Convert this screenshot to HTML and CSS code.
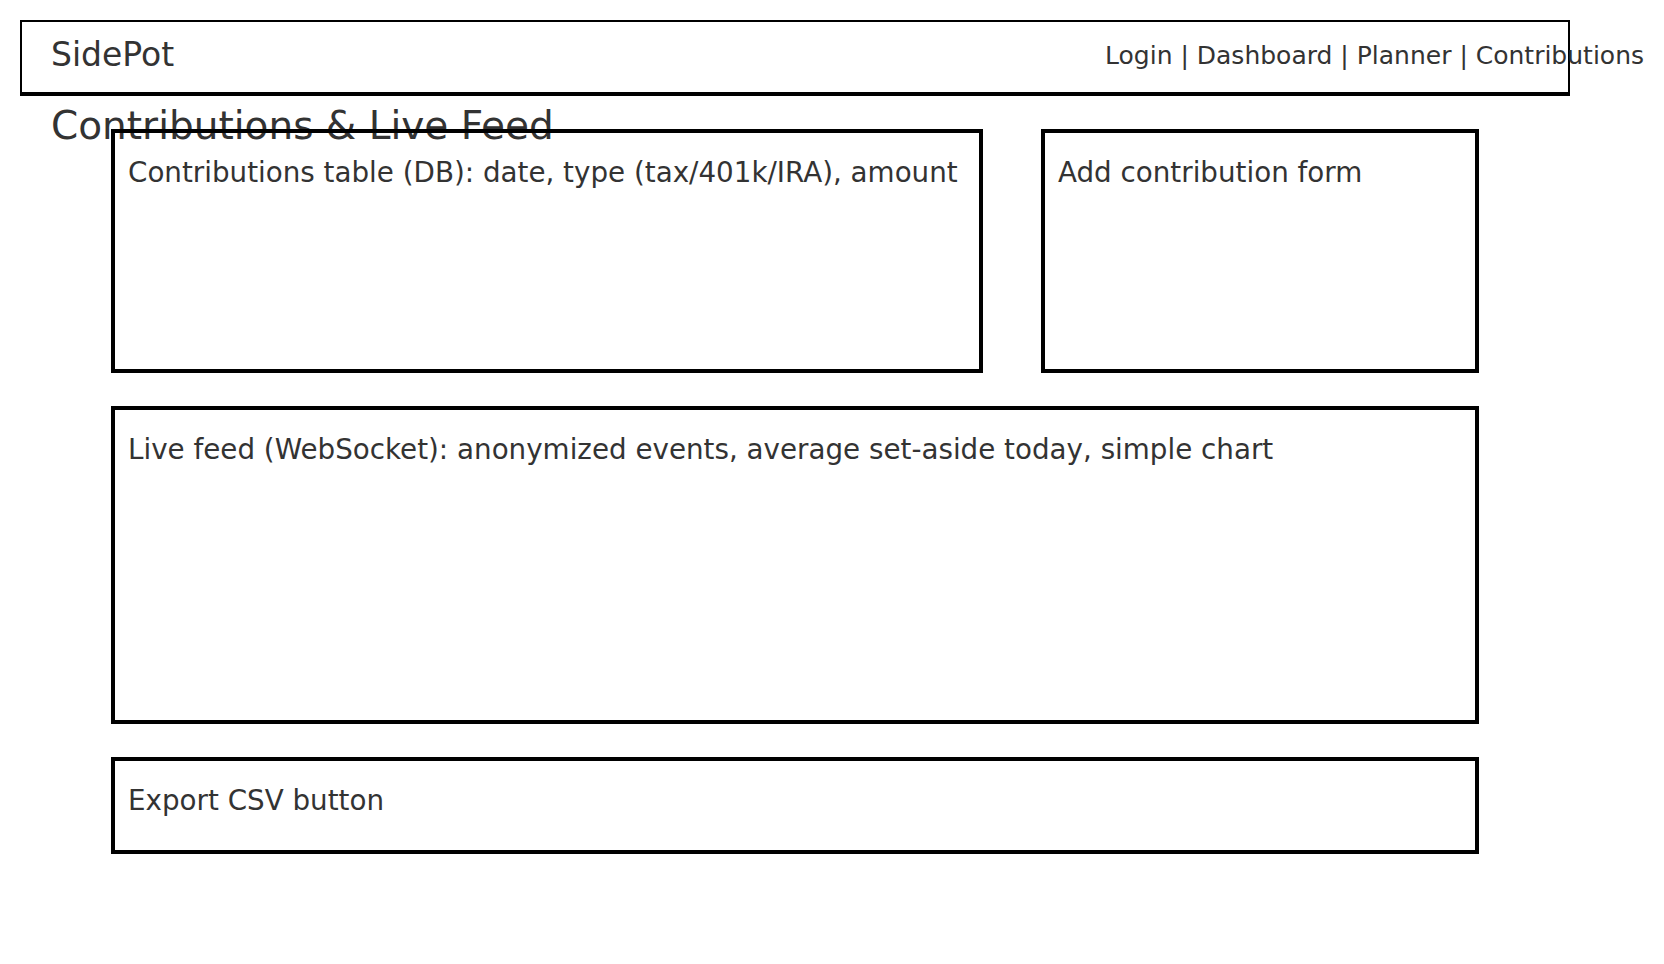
FILE: index.html
```html
<!DOCTYPE html>
<html lang="en">
<head>
<meta charset="utf-8">
<title>SidePot – Contributions</title>
<link rel="stylesheet" href="styles.css">
</head>
<body>
<header class="topbar">
  <div class="brand">SidePot</div>
  <nav class="nav">Login | Dashboard | Planner | Contributions</nav>
</header>
<h1 class="page-title">Contributions &amp; Live Feed</h1>
<main class="content">
  <div class="row">
    <section class="box box-table">Contributions table (DB): date, type (tax/401k/IRA), amount</section>
    <section class="box box-form">Add contribution form</section>
  </div>
  <section class="box box-feed">Live feed (WebSocket): anonymized events, average set-aside today, simple chart</section>
  <section class="box box-export">Export CSV button</section>
</main>
</body>
</html>
```

FILE: styles.css
```css
* { box-sizing: border-box; }
html, body { margin: 0; padding: 0; background: #fff; }
body {
  font-family: "DejaVu Sans", Verdana, sans-serif;
  color: #333;
  width: 1664px;
  height: 964px;
  overflow: hidden;
}
.topbar {
  margin: 20px 0 0 20px;
  width: 1550px;
  height: 76px;
  border: 2px solid #000;
  border-bottom-width: 4px;
  display: flex;
  justify-content: space-between;
  align-items: flex-start;
  padding: 14px 0 0 29px;
}
.brand {
  font-size: 33px;
  line-height: 38px;
  white-space: nowrap;
}
.nav {
  font-size: 25px;
  line-height: 30px;
  margin-top: 5px;
  margin-right: -76px;
  white-space: nowrap;
}
.page-title {
  margin: 8px 0 0 51px;
  height: 25px;
  font-size: 39px;
  line-height: 44px;
  font-weight: normal;
  white-space: nowrap;
}
.content {
  margin-left: 111px;
  width: 1368px;
  display: flex;
  flex-direction: column;
  gap: 33px;
}
.row {
  display: flex;
  gap: 58px;
}
.box {
  border: 4px solid #000;
  font-size: 27.75px;
  line-height: 33px;
  padding: 23px 13px 0 13px;
  white-space: nowrap;
}
.box-table { width: 872px; height: 244px; }
.box-form { width: 438px; height: 244px; }
.box-feed { height: 318px; }
.box-export { height: 97px; }
```
